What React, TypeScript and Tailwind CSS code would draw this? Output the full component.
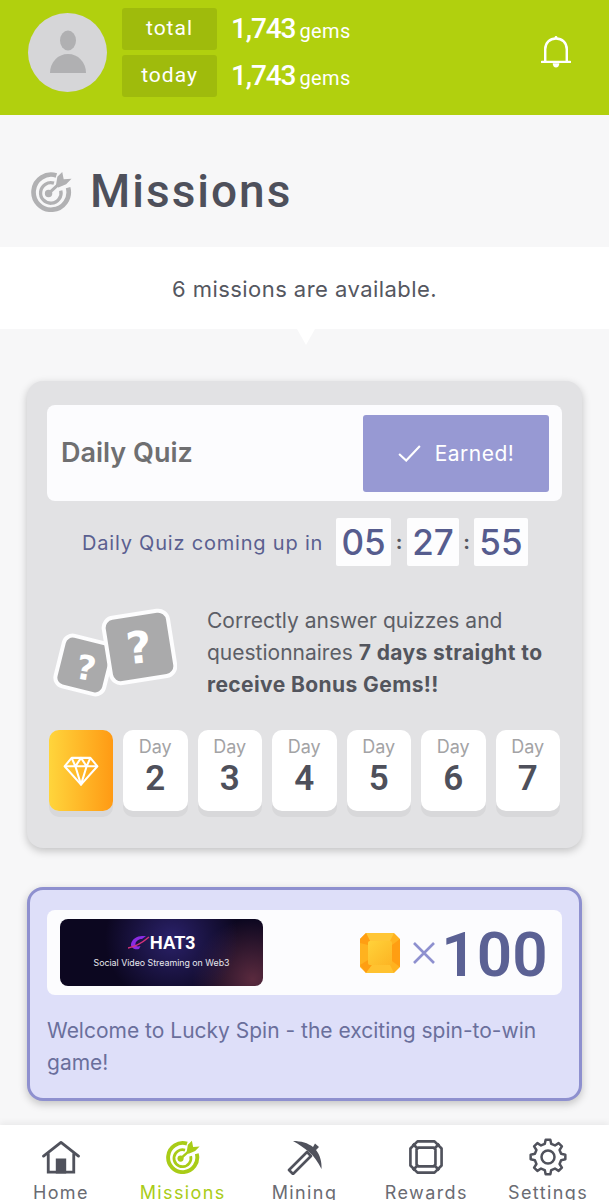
const body = "font-['Inter','Noto_Sans',sans-serif]";
const din = "font-['Roboto','Liberation_Sans',sans-serif]";

const TargetIcon = ({ className }: { className?: string }) => (
  <svg viewBox="0 0 42 42" className={className} fill="none" stroke="currentColor">
    <path d="M26 4.500A18 18 0 1 0 38 17" strokeWidth="4.800" />
    <path d="M23.500 12.500A10.500 10.500 0 1 0 30.500 20" strokeWidth="3.400" />
    <path d="M17 24L29 13" strokeWidth="3" strokeLinecap="round" />
    <circle cx="18" cy="23" r="3.800" fill="currentColor" stroke="none" />
    <path d="M25.500 15L27 6L32 1L33.500 8.500L41.500 8L36 13.500L28 17Z" fill="currentColor" stroke="none" />
  </svg>
);

const HomeIcon = () => (
  <svg viewBox="0 0 40 36" className="w-[38px] h-[34px] text-[#50525c]" fill="none" stroke="currentColor" strokeWidth="3">
    <path d="M1.500 17L20 2.500L38.500 17" strokeLinejoin="round" strokeLinecap="round" />
    <path d="M6.500 14V34H33.500V14" />
    <path d="M16 34V21H24V34H16Z" fill="currentColor" />
  </svg>
);

const PickIcon = () => (
  <svg viewBox="0 0 36 36" className="w-[36px] h-[36px] text-[#50525c]">
    <path d="M3 31L21 13L25 17L7 35Z" fill="none" stroke="currentColor" strokeWidth="2.600" strokeLinejoin="round" />
    <path d="M7 2C15 2 22 4 27 8L29 4.500L33 8L30 11C34 16 36 23 35.500 30C32 23 28 17 23 13C18 9 13 5 7 2Z" fill="currentColor" />
  </svg>
);

const GemIcon = () => (
  <svg viewBox="0 0 36 36" className="w-[34px] h-[34px] text-[#50525c]" fill="none" stroke="currentColor" strokeWidth="2.800" strokeLinejoin="round">
    <path d="M9 1.500H27L34.500 9V27L27 34.500H9L1.500 27V9Z" />
    <path d="M10 8H26L28 10V26L26 28H10L8 26V10Z" />
    <path d="M4 4L9 9M32 4L27 9M4 32L9 27M32 32L27 27" />
  </svg>
);

const gearPath = (() => {
  const pts: string[] = [];
  const n = 8;
  for (let i = 0; i < n; i++) {
    const a = (i / n) * Math.PI * 2;
    const s = Math.PI / n;
    const p = (r: number, t: number) => `${(19 + r * Math.cos(t)).toFixed(2)} ${(19 + r * Math.sin(t)).toFixed(2)}`;
    pts.push(`${i === 0 ? "M" : "L"}${p(13.5, a - s * 0.62)}`, `L${p(17.5, a - s * 0.34)}`, `L${p(17.5, a + s * 0.34)}`, `L${p(13.5, a + s * 0.62)}`);
  }
  return pts.join(" ") + "Z";
})();

const GearIcon = () => (
  <svg viewBox="0 0 38 38" className="w-[38px] h-[38px] text-[#50525c]" fill="none" stroke="currentColor" strokeWidth="2.500" strokeLinejoin="round">
    <path d={gearPath} />
    <circle cx="19" cy="19" r="6.500" />
  </svg>
);

const DiamondIcon = () => (
  <svg viewBox="0 0 38 32" className="w-[36px] h-[30px] text-white" fill="none" stroke="currentColor" strokeWidth="2.200" strokeLinejoin="round">
    <path d="M9 2H29L36.500 11L19 30.500L1.500 11Z" />
    <path d="M1.500 11H36.500M9 2L13 11L19 30.500L25 11L29 2M13 11L19 2L25 11" />
  </svg>
);

const QuizDice = () => (
  <svg viewBox="0 0 124 90" className="w-[124px] h-[90px] shrink-0">
    <g stroke="#fdfdfe" strokeWidth="4">
      <rect x="6" y="31" width="50" height="52" rx="9" fill="#aaaaab" transform="rotate(14 31 57)" />
      <rect x="54" y="6" width="65" height="66" rx="10" fill="#aaaaab" transform="rotate(-9 86 39)" />
    </g>
    <text x="33" y="72" textAnchor="middle" fontSize="34" fontWeight="800" fill="#fff" fontFamily="'DejaVu Sans',sans-serif" transform="rotate(10 33 60)">?</text>
    <text x="86" y="55" textAnchor="middle" fontSize="44" fontWeight="800" fill="#fff" fontFamily="'DejaVu Sans',sans-serif" transform="rotate(-6 86 40)">?</text>
  </svg>
);

const CoinIcon = () => (
  <svg viewBox="0 0 40 40" className="w-[40px] h-[40px] shrink-0">
    <defs>
      <linearGradient id="coin" x1="0" y1="0" x2="1" y2="1">
        <stop offset="0" stopColor="#ffd23a" />
        <stop offset="1" stopColor="#fdb423" />
      </linearGradient>
    </defs>
    <path d="M6 0H34L40 6V34L34 40H6L0 34V6Z" fill="#ffb21f" />
    <path d="M6 0H34L30 8H10Z" fill="#ffc636" />
    <path d="M40 6V34L32 28V12Z" fill="#ff9e12" />
    <path d="M0 6L6 0L10 8L8 12L0 10Z" fill="#ff9e12" />
    <path d="M0 32L8 27L12 32L6 40Z" fill="#ff9e12" />
    <path d="M6 40L12 32H30L34 40Z" fill="#ffc230" />
    <rect x="8" y="8" width="24" height="24" rx="2" fill="url(#coin)" />
  </svg>
);

const TimerBox = ({ value, width }: { value: string; width: string }) => (
  <div className={`${width} h-[48px] pt-[1px] bg-[#fdfdfe] rounded-[2px] flex items-center justify-center text-[35px] font-medium text-[#565c8e] ${body}`}>
    {value}
  </div>
);

const navItems = [
  { label: "Home", icon: <HomeIcon /> },
  { label: "Missions", icon: <TargetIcon className="w-[34px] h-[34px] text-[#a9cc17]" />, active: true },
  { label: "Mining", icon: <PickIcon /> },
  { label: "Rewards", icon: <GemIcon /> },
  { label: "Settings", icon: <GearIcon /> },
];

export default function App() {
  return (
    <div className={`w-[609px] h-[1200px] overflow-hidden flex flex-col bg-[#f7f7f8] ${body}`}>
      <header className="h-[115px] shrink-0 bg-[#b1d00e] flex items-center pl-[28px] pr-[38px] pb-[11px]">
        <div className="w-[79px] h-[79px] rounded-full bg-[#d6d6d8] flex items-center justify-center">
          <svg viewBox="0 0 36 44" className="w-[36px] h-[44px] text-[#b0b0b2]" fill="currentColor">
            <ellipse cx="18" cy="10.500" rx="8" ry="10" />
            <path d="M0 43C0 32 8 24 18 24C28 24 36 32 36 43Z" />
          </svg>
        </div>
        <div className="ml-[15px] flex flex-col gap-[5px]">
          {["total", "today"].map((label) => (
            <div key={label} className="flex items-center">
              <div className={`w-[95px] h-[42px] rounded-[3px] bg-[#9fbb0c] flex items-center justify-center text-white text-[21px] tracking-[1px] ${din}`}>
                {label}
              </div>
              <div className={`ml-[14px] text-white flex items-baseline ${din}`}>
                <span className="text-[28px] font-medium tracking-[-1.1px]">1,743</span>
                <span className="ml-[4px] text-[20px] tracking-[0.4px]">gems</span>
              </div>
            </div>
          ))}
        </div>
        <svg viewBox="0 0 32 36" className="ml-auto w-[30px] h-[34px] text-white" fill="none" stroke="currentColor" strokeWidth="2.600">
          <path d="M1 28.500H31" strokeLinecap="round" />
          <path d="M4.500 28.500V15C4.500 8 9.500 3.500 16 3.500C22.500 3.500 27.500 8 27.500 15V28.500" />
          <circle cx="16" cy="2.500" r="1.500" fill="currentColor" stroke="none" />
          <path d="M12.500 30H19.500C19.500 33 18 34.500 16 34.500C14 34.500 12.500 33 12.500 30Z" fill="currentColor" stroke="none" />
        </svg>
      </header>

      <main className="flex-1 min-h-0 overflow-hidden">
        <div className="h-[132px] pt-[20px] flex items-center pl-[31px] gap-[18px]">
          <TargetIcon className="w-[41px] h-[41px] text-[#b1b1b3]" />
          <h1 className={`text-[46px] font-medium tracking-[2px] text-[#4e505b] ${din}`}>Missions</h1>
        </div>

        <div className="relative h-[82px] pt-[3px] bg-white flex items-center justify-center text-[22px] tracking-[0.45px] text-[#55575f]">
          6 missions are available.
          <div className="absolute left-[297px] top-full w-0 h-0 border-l-[9px] border-r-[9px] border-t-[16px] border-l-transparent border-r-transparent border-t-white" />
        </div>

        <div className="px-[27px] pt-[52px] flex flex-col gap-[39px]">
          <section className="h-[467px] rounded-[16px] bg-[#e2e2e4] shadow-[0_3px_8px_rgba(0,0,0,0.22)] px-[20px] pt-[24px]">
            <div className="h-[96px] rounded-[8px] bg-[#fcfcfe] flex items-center justify-between pl-[14px] pr-[13px]">
              <span className="pt-[1px] text-[27px] font-semibold text-[#6f6f71]">Daily Quiz</span>
              <div className="w-[186px] h-[77px] pt-[1px] rounded-[3px] bg-[#9799d3] flex items-center justify-center gap-[14px] text-white text-[21px] tracking-[0.5px]">
                <svg viewBox="0 0 24 18" className="w-[23px] h-[17px]" fill="none" stroke="currentColor" strokeWidth="2.200">
                  <path d="M1 9.500L8.500 16.500L23 1" />
                </svg>
                Earned!
              </div>
            </div>

            <div className="mt-[17px] flex items-center pl-[35px]">
              <span className="pt-[2px] text-[20px] text-[#5a5f90] tracking-[0.8px] w-[254px] whitespace-nowrap">Daily Quiz coming up in</span>
              <TimerBox value="05" width="w-[55px]" />
              <span className="w-[16px] text-center text-[20px] font-bold text-[#55575f]">:</span>
              <TimerBox value="27" width="w-[52px]" />
              <span className="w-[15px] text-center text-[20px] font-bold text-[#55575f]">:</span>
              <TimerBox value="55" width="w-[54px]" />
            </div>

            <div className="mt-[39px] flex items-center pl-[6px]">
              <QuizDice />
              <p className="ml-[30px] text-[21px] leading-[32px] text-[#5c5e66]">
                Correctly answer quizzes and questionnaires <strong className="font-bold tracking-[0.4px] text-[#53555d]">7 days straight to receive Bonus Gems!!</strong>
              </p>
            </div>

            <div className="mt-[29px] flex gap-[10px] pl-[2px]">
              <div className="w-[64px] h-[81px] rounded-[10px] bg-[linear-gradient(90deg,#ffd53c,#ff9a14)] shadow-[0_6px_0_#d8d8da] flex items-center justify-center">
                <DiamondIcon />
              </div>
              {["2", "3", "4", "5", "6", "7"].map((day) => (
                <div key={day} className="w-[64.5px] h-[81px] rounded-[10px] bg-white shadow-[0_6px_0_#d8d8da] flex flex-col items-center pt-[5px]">
                  <span className="text-[18px] leading-[24px] text-[#a3a3a5]">Day</span>
                  <span className={`text-[35px] leading-[40px] font-semibold text-[#4e505b] ${din}`}>{day}</span>
                </div>
              ))}
            </div>
          </section>

          <section className="h-[214px] rounded-[16px] bg-[#dedff9] border-[3px] border-[#8e90cf] shadow-[0_3px_8px_rgba(0,0,0,0.22)] px-[17px] pt-[20px]">
            <div className="h-[85px] rounded-[8px] bg-[#fcfcfe] flex items-center pl-[13px] pr-[14px]">
              <div className="w-[203px] h-[67px] rounded-[8px] bg-[#0c0720] bg-[radial-gradient(circle_at_55%_30%,#2a2169,transparent_55%),radial-gradient(circle_at_95%_90%,#5a2a3e,transparent_30%)] flex flex-col items-center justify-center text-white">
                <div className="flex items-center h-[18px] -mt-[3px]">
                  <svg viewBox="0 0 22 16" className="w-[22px] h-[16px]">
                    <path d="M14 1C9 1 4 4 3 9C2.500 13 7 15 11 14L12.500 11C9 12 7 11 7.500 8.500C8 6 11 4 14 4L18 1Z" fill="#8a2be2" />
                    <path d="M0 13C6 12 14 8 21 2" stroke="#d6327a" strokeWidth="1.500" fill="none" />
                  </svg>
                  <span className="text-[18px] leading-[18px] font-bold font-['Liberation_Sans',sans-serif]">HAT3</span>
                </div>
                <span className="text-[8.800px] leading-[12px] mt-[5px] text-[#e8e8ee] whitespace-nowrap">Social Video Streaming on Web3</span>
              </div>
              <div className="ml-auto flex items-center">
                <CoinIcon />
                <svg viewBox="0 0 24 24" className="ml-[12px] w-[24px] h-[24px] text-[#8e90cf]" fill="none" stroke="currentColor" strokeWidth="2.600">
                  <path d="M2 2L22 22M22 2L2 22" />
                </svg>
                <span className={`ml-[5px] pt-[5px] text-[62px] leading-[62px] font-semibold tracking-[0.2px] text-[#5b6194] ${din}`}>100</span>
              </div>
            </div>
            <p className="mt-[20px] text-[21px] leading-[32px] text-[#6a6f9c]">
              Welcome to Lucky Spin - the exciting spin-to-win game!
            </p>
          </section>
        </div>
      </main>

      <nav className="relative h-[75px] shrink-0 bg-white shadow-[0_-3px_6px_rgba(0,0,0,0.05)] grid grid-cols-5 overflow-hidden">
        {navItems.map((item) => (
          <div key={item.label} className="flex flex-col items-center pt-[13px]">
            <div className="h-[38px] flex items-center justify-center">{item.icon}</div>
            <span className={`mt-[5px] text-[18px] leading-[24px] tracking-[1.4px] whitespace-nowrap ${item.active ? "text-[#a9cc17]" : "text-[#6a6b72]"}`}>
              {item.label}
            </span>
          </div>
        ))}
      </nav>
    </div>
  );
}
